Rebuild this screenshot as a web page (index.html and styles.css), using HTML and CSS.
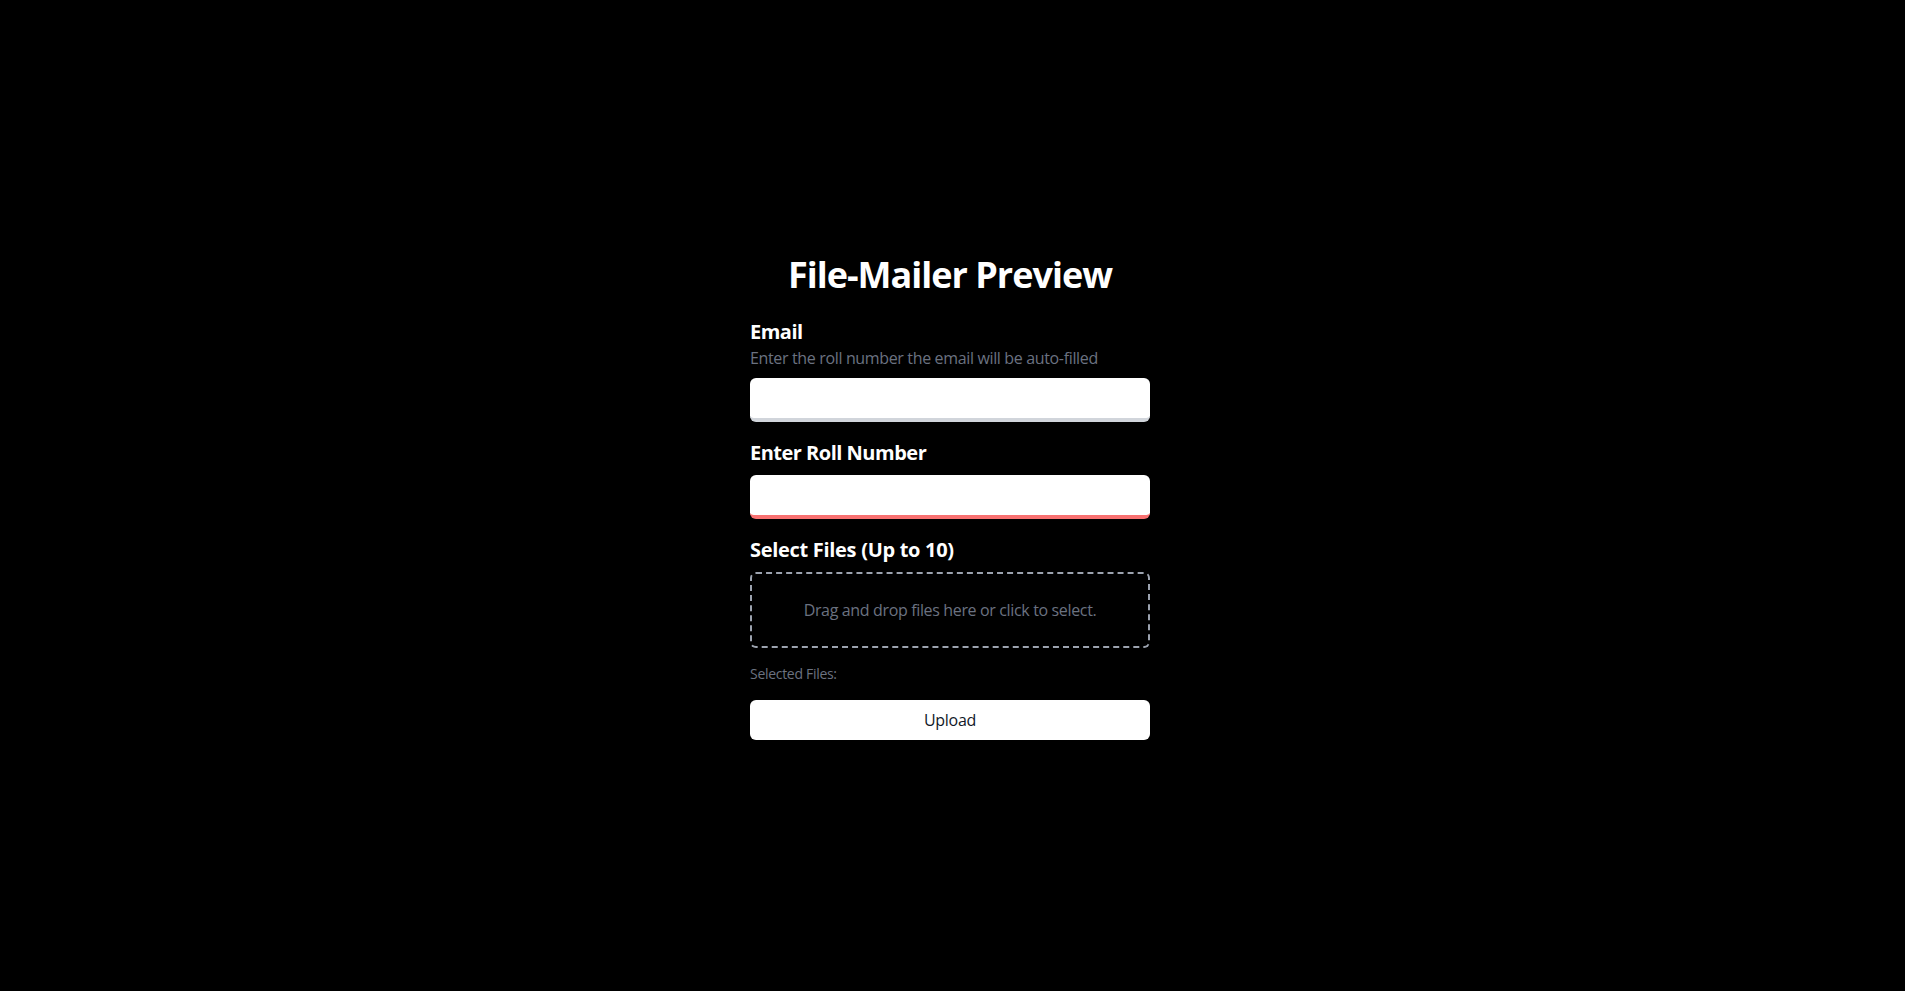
FILE: index.html
```html
<!DOCTYPE html>
<html lang="en">
<head>
<meta charset="utf-8">
<title>File-Mailer Preview</title>
<link rel="stylesheet" href="styles.css">
</head>
<body>
<main class="page">
  <form class="card">
    <h1 class="title">File-Mailer Preview</h1>
    <div class="field">
      <label class="label" for="email">Email</label>
      <p class="hint">Enter the roll number the email will be auto-filled</p>
      <input class="input input-email" id="email" type="email">
    </div>
    <div class="field">
      <label class="label" for="roll">Enter Roll Number</label>
      <input class="input input-roll" id="roll" type="text">
    </div>
    <div class="field field-files">
      <label class="label label-files">Select Files (Up to 10)</label>
      <div class="dropzone">Drag and drop files here or click to select.</div>
    </div>
    <p class="selected">Selected Files:</p>
    <button class="upload" type="button">Upload</button>
  </form>
</main>
</body>
</html>
```

FILE: styles.css
```css
* { box-sizing: border-box; }
html, body { margin: 0; padding: 0; }
body {
  background: #000;
  color: #fff;
  font-family: "Open Sans", "Noto Sans", "Liberation Sans", sans-serif;
}
.page {
  min-height: 100vh;
  display: flex;
  align-items: center;
  justify-content: center;
  padding: 3px 5px 0 0;
}
.card {
  width: 400px;
  display: flex;
  flex-direction: column;
}
.title {
  margin: 0 0 23px;
  font-size: 36px;
  line-height: 40px;
  font-weight: 700;
  letter-spacing: -1px;
  text-align: center;
}
.field {
  display: flex;
  flex-direction: column;
  margin-bottom: 17px;
}
.field-files { margin-bottom: 16px; }
.label {
  font-size: 20px;
  line-height: 28px;
  font-weight: 700;
  letter-spacing: -0.5px;
  margin-bottom: 8px;
}
.label-files { letter-spacing: -0.3px; }
.field .label:has(+ .hint) { margin-bottom: 0; }
.hint {
  margin: 0 0 8px;
  font-size: 16px;
  line-height: 24px;
  letter-spacing: -0.35px;
  color: #6b7280;
}
.input {
  height: 44px;
  border: none;
  border-radius: 6px;
  background: #fff;
  padding: 0 12px;
  font: inherit;
  outline: none;
}
.input-email { border-bottom: 4px solid #d1d5db; }
.input-roll { border-bottom: 4px solid #f87171; }
.dropzone {
  height: 76px;
  border: 2px dashed #9ca3af;
  border-radius: 6px;
  display: flex;
  align-items: center;
  justify-content: center;
  font-size: 16px;
  line-height: 24px;
  letter-spacing: -0.35px;
  color: #6b7280;
}
.selected {
  margin: 0 0 16px;
  font-size: 14px;
  line-height: 20px;
  letter-spacing: -0.3px;
  color: #6b7280;
}
.upload {
  height: 40px;
  border: none;
  border-radius: 6px;
  background: #fff;
  color: #111827;
  font-family: inherit;
  font-size: 16px;
  letter-spacing: -0.3px;
}
```
